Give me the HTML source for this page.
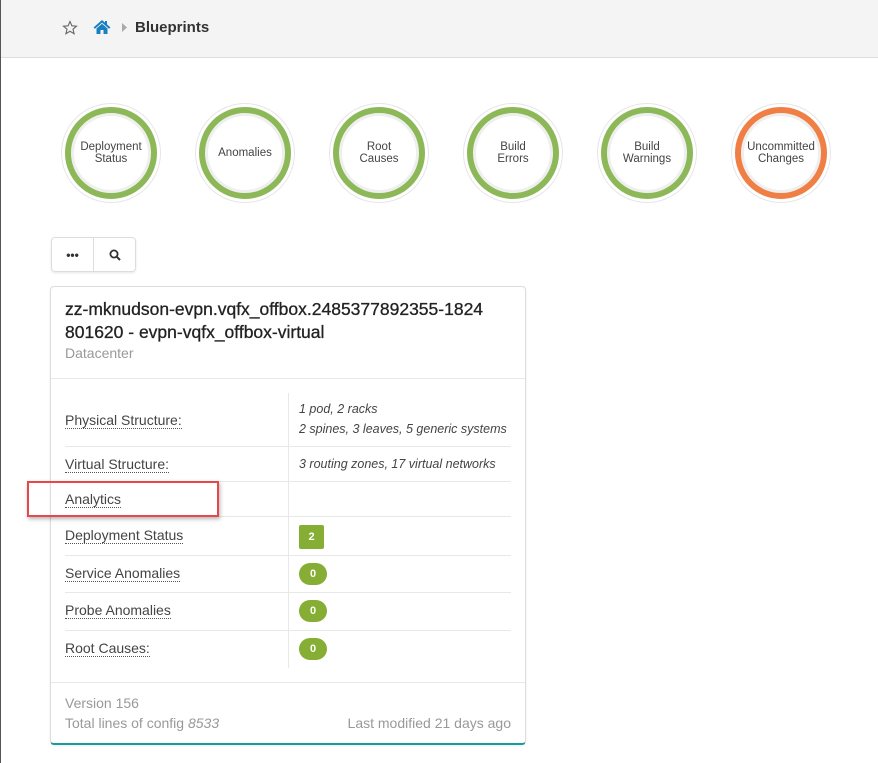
<!DOCTYPE html>
<html><head><meta charset="utf-8"><style>
*{box-sizing:border-box;margin:0;padding:0}
body{width:878px;height:763px;background:#fff;font-family:"Liberation Sans",sans-serif;color:#333;position:relative;overflow:hidden}
.edge{position:absolute;left:0;top:0;width:1px;height:763px;background:#555;z-index:5}
.hdr{position:absolute;left:0;top:0;width:878px;height:58px;background:#f4f4f4;border-bottom:1px solid #ddd}
.bc{position:absolute;top:19px;font-size:15px;font-weight:bold;color:#333}
.c{position:absolute;top:103px;width:100px;height:100px;border-radius:50%;background:#fff;box-shadow:0 0 0 1px #e6e6e6 inset}
.c i{position:absolute;left:4px;top:4px;width:92px;height:92px;border-radius:50%;border:6px solid #8db858;box-shadow:0 0 0 3px #efefef inset;display:flex;align-items:center;justify-content:center;text-align:center;font-style:normal;font-size:11.5px;line-height:12px;color:#444}
.c.o i{border-color:#f07f46}
.btns{position:absolute;left:51px;top:237px;width:85px;height:35px;border:1px solid #ddd;border-radius:4px;box-shadow:0 1px 2px rgba(0,0,0,.1);display:flex}
.btns div{flex:1;display:flex;align-items:center;justify-content:center}
.card{position:absolute;left:50px;top:286px;width:476px;height:459px;border:1px solid #ddd;border-bottom:2px solid #1a9ba0;border-radius:4px;box-shadow:0 1px 2px rgba(0,0,0,.08)}
.t{position:absolute;left:14px;top:11px;font-size:17.5px;line-height:23px;color:#222;-webkit-text-stroke:0.3px #222}
.sub{position:absolute;left:14px;top:58px;font-size:14px;color:#999}
.row{position:absolute;left:14px;width:446px;border-bottom:1px solid #e8e8e8}
.l{position:absolute;left:0;font-size:14px;color:#444;border-bottom:1px dotted #555;line-height:15px;white-space:nowrap}
.v{position:absolute;left:234px;font-size:12.5px;font-style:italic;color:#444;line-height:20px;white-space:nowrap}
.b{position:absolute;left:234px;background:#86ad34;color:#fff;font-size:11px;font-weight:bold;text-align:center}
.vl{position:absolute;left:237px;top:106px;width:1px;height:275px;background:#e8e8e8}
.ft{position:absolute;font-size:14px;color:#999}
</style></head><body>
<div class="edge"></div>
<div class="hdr">
<svg style="position:absolute;left:62px;top:20px" width="16" height="16" viewBox="0 0 16 16"><path d="M8 1.5l1.9 4.3 4.6.4-3.5 3 1.1 4.5L8 11.3 3.9 13.7 5 9.2 1.5 6.2l4.6-.4z" fill="none" stroke="#666" stroke-width="1.1"/></svg>
<svg style="position:absolute;left:93px;top:19px" width="18" height="16" viewBox="0 0 18 16"><path d="M9 1L0.5 8.5 2 9.8 9 3.6l7 6.2 1.5-1.3L14 5.4V2h-2v1.6z" fill="#1a7fc1"/><path d="M3.5 9.5L9 4.8l5.5 4.7V15h-4v-4h-3v4h-4z" fill="#1a7fc1"/></svg>
<svg style="position:absolute;left:122px;top:23px" width="6" height="9"><path d="M0 0l5 4.5L0 9z" fill="#aaa"/></svg>
<div class="bc" style="left:135px">Blueprints</div>
</div>
<div class="c" style="left:61px"><i>Deployment<br>Status</i></div>
<div class="c" style="left:195px"><i>Anomalies</i></div>
<div class="c" style="left:329px"><i>Root<br>Causes</i></div>
<div class="c" style="left:463px"><i>Build<br>Errors</i></div>
<div class="c" style="left:597px"><i>Build<br>Warnings</i></div>
<div class="c o" style="left:731px"><i>Uncommitted<br>Changes</i></div>
<div class="btns"><div style="border-right:1px solid #ddd;font-weight:bold;font-size:12px;color:#333">•••</div><div><svg width="12" height="12" viewBox="0 0 12 12"><circle cx="5" cy="5" r="3.6" fill="none" stroke="#333" stroke-width="1.8"/><path d="M7.6 7.6L11 11" stroke="#333" stroke-width="2"/></svg></div></div>
<div class="card">
<div class="t">zz-mknudson-evpn.vqfx_offbox.2485377892355-1824<br>801620 - evpn-vqfx_offbox-virtual</div>
<div class="sub">Datacenter</div>
<div style="position:absolute;left:0;top:91px;width:474px;border-top:1px solid #e8e8e8"></div>
<div class="vl"></div>
<div class="row" style="top:106px;height:54px"><span class="l" style="top:20px">Physical Structure:</span><span class="v" style="top:6px">1 pod, 2 racks<br>2 spines, 3 leaves, 5 generic systems</span></div>
<div class="row" style="top:160px;height:35px"><span class="l" style="top:10px">Virtual Structure:</span><span class="v" style="top:7px">3 routing zones, 17 virtual networks</span></div>
<div class="row" style="top:195px;height:35px"><span class="l" style="top:10px">Analytics</span></div>
<div class="row" style="top:230px;height:39px"><span class="l" style="top:11px">Deployment Status</span><span class="b" style="top:8px;width:25px;height:24px;line-height:24px;border-radius:2px">2</span></div>
<div class="row" style="top:269px;height:37px"><span class="l" style="top:10px">Service Anomalies</span><span class="b" style="top:7px;width:28px;height:22px;line-height:22px;border-radius:11px">0</span></div>
<div class="row" style="top:306px;height:38px"><span class="l" style="top:10px">Probe Anomalies</span><span class="b" style="top:7px;width:28px;height:22px;line-height:22px;border-radius:11px">0</span></div>
<div class="row" style="top:344px;height:37px;border-bottom:none"><span class="l" style="top:10px">Root Causes:</span><span class="b" style="top:7px;width:28px;height:22px;line-height:22px;border-radius:11px">0</span></div>
<div style="position:absolute;left:0;top:395px;width:474px;border-top:1px solid #e8e8e8"></div>
<div class="ft" style="left:14px;top:408px">Version 156</div>
<div class="ft" style="left:14px;top:428px">Total lines of config <i>8533</i></div>
<div class="ft" style="right:14px;top:428px">Last modified 21 days ago</div>
</div>
<div style="position:absolute;left:27px;top:481px;width:192px;height:36px;border:2px solid #e8474a;box-shadow:1px 2px 4px rgba(0,0,0,.3)"></div>
</body></html>
